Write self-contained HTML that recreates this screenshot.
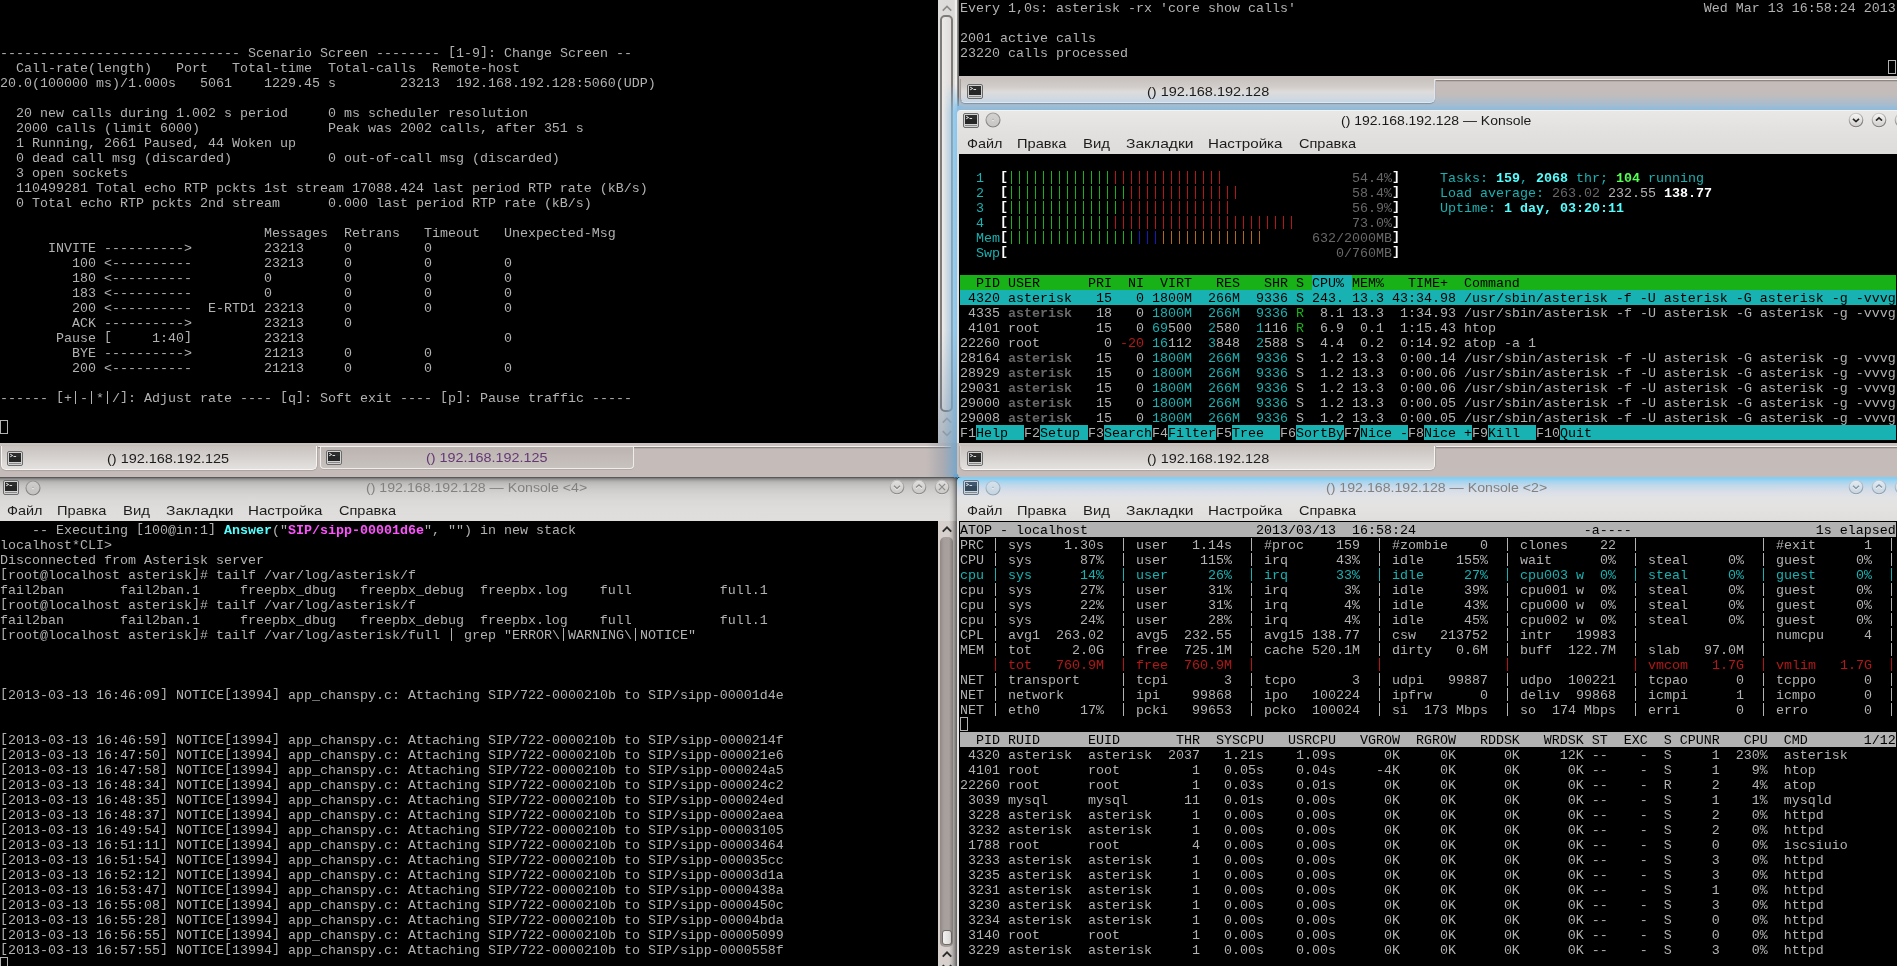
<!DOCTYPE html>
<html><head><meta charset="utf-8"><title>konsole</title>
<style>
html,body{margin:0;padding:0}
body{width:1897px;height:966px;overflow:hidden;background:#000;position:relative;font-family:"Liberation Sans",sans-serif}
#root{position:absolute;left:0;top:0;width:1897px;height:966px;overflow:hidden;will-change:transform}
.t{position:absolute;font:13.333px/15px "Liberation Mono",monospace;color:#b2b2b2;white-space:pre}
.l{position:absolute;height:15px;line-height:15px;white-space:pre}
.b{position:absolute;height:15px}
.v{position:absolute;height:13px;background:repeating-linear-gradient(90deg,transparent 0,transparent 3px,var(--c) 3px,var(--c) 4px,transparent 4px,transparent 8px)}
i{font-style:normal;position:relative;top:-2px}
u{text-decoration:none;color:transparent}
.cur{position:absolute;width:6px;height:12px;border:1px solid #b2b2b2;margin-top:0px}
.bw{color:#fff;font-weight:bold}.fc{color:#18b2b2}.bc{color:#54ffff;font-weight:bold}
.fg{color:#18b218}.bg2{color:#54ff54;font-weight:bold}.fr{color:#b21818}.fb{color:#1818b2}
.fy{color:#b26818}.fd{color:#686868}.bd{color:#686868;font-weight:bold}.bm{color:#ff54ff;font-weight:bold}.fk{color:#000}

.a{position:absolute}
.ui{position:absolute;font-family:"Liberation Sans",sans-serif;white-space:pre}
.tabbar{position:absolute;height:34px;background:#c5bcb9}
.tabbar .top{position:absolute;left:0;right:0;top:0;height:3px;background:#cac2bf}
.tabbar .hl{position:absolute;top:3px;height:1px;background:#f3f1f0}
.tabbar .sh{position:absolute;top:4px;height:1px;background:#8d8683;box-shadow:0 1px 0 #b5adaa}
.tab{position:absolute;top:3px;height:24px;box-sizing:border-box;border:1px solid #f6f5f4;border-top:0;border-radius:0 0 5px 5px;
 background:linear-gradient(#c9c3c0 0,#d2cdca 8px,#e3e1df 100%);box-shadow:0 1px 1px #aaa29f,1px 0 1px #b0a8a5,-1px 0 1px #b0a8a5}
.tab2{position:absolute;top:4px;height:22px;box-sizing:border-box;border:1px solid #efedec;border-top:0;border-radius:0 0 4px 4px;
 background:linear-gradient(#bcb4b1,#c8c2bf);box-shadow:0 1px 0 #b3aaa7}
.tabtxt{font-size:13px;letter-spacing:.62px;color:#1e1e1e;line-height:15px}
.title{position:absolute;height:23px}
.menu{position:absolute;height:21px;background:#dfdddb}
.u{font-size:12.2px;line-height:15px;transform-origin:0 0}
.ttxt{font-size:13px;letter-spacing:.6px;line-height:15px}
.sbt{position:absolute;width:19px;background:#dddbd9}
</style></head>
<body>
<div id="root">
<div class="t" style="left:0px;top:0px">
<div class="l" style="top:46px;left:0px">------------------------------ Scenario Screen -------- <i>[</i>1-9<i>]</i>: Change Screen --</div>
<div class="l" style="top:61px;left:0px">  Call-rate(length)   Port   Total-time  Total-calls  Remote-host</div>
<div class="l" style="top:76px;left:0px">20.0(100000 ms)/1.000s   5061    1229.45 s        23213  192.168.192.128:5060(UDP)</div>
<div class="l" style="top:106px;left:0px">  20 new calls during 1.002 s period     0 ms scheduler resolution</div>
<div class="l" style="top:121px;left:0px">  2000 calls (limit 6000)                Peak was 2002 calls, after 351 s</div>
<div class="l" style="top:136px;left:0px">  1 Running, 2661 Paused, 44 Woken up</div>
<div class="l" style="top:151px;left:0px">  0 dead call msg (discarded)            0 out-of-call msg (discarded)</div>
<div class="l" style="top:166px;left:0px">  3 open sockets</div>
<div class="l" style="top:181px;left:0px">  110499281 Total echo RTP pckts 1st stream 17088.424 last period RTP rate (kB/s)</div>
<div class="l" style="top:196px;left:0px">  0 Total echo RTP pckts 2nd stream      0.000 last period RTP rate (kB/s)</div>
<div class="l" style="top:226px;left:0px">                                 Messages  Retrans   Timeout   Unexpected-Msg</div>
<div class="l" style="top:241px;left:0px">      INVITE ----------&gt;         23213     0         0</div>
<div class="l" style="top:256px;left:0px">         100 &lt;----------         23213     0         0         0</div>
<div class="l" style="top:271px;left:0px">         180 &lt;----------         0         0         0         0</div>
<div class="l" style="top:286px;left:0px">         183 &lt;----------         0         0         0         0</div>
<div class="l" style="top:301px;left:0px">         200 &lt;----------  E-RTD1 23213     0         0         0</div>
<div class="l" style="top:316px;left:0px">         ACK ----------&gt;         23213     0</div>
<div class="l" style="top:331px;left:0px">       Pause <i>[</i>     1:40<i>]</i>         23213                         0</div>
<div class="l" style="top:346px;left:0px">         BYE ----------&gt;         21213     0         0</div>
<div class="l" style="top:361px;left:0px">         200 &lt;----------         21213     0         0         0</div>
<div class="v" style="left:72px;top:391px;width:8px;--c:#b2b2b2"></div>
<div class="v" style="left:88px;top:391px;width:8px;--c:#b2b2b2"></div>
<div class="v" style="left:104px;top:391px;width:8px;--c:#b2b2b2"></div>
<div class="l" style="top:391px;left:0px">------ <i>[</i>+<u>|</u>-<u>|</u>*<u>|</u>/<i>]</i>: Adjust rate ---- <i>[</i>q<i>]</i>: Soft exit ---- <i>[</i>p<i>]</i>: Pause traffic -----</div>
<div class="cur" style="left:0px;top:420px"></div>
</div>
<div class="t" style="left:960px;top:0px">
<div class="l" style="top:1px;left:0px">Every 1,0s: asterisk -rx 'core show calls'                                                   Wed Mar 13 16:58:24 2013</div>
<div class="l" style="top:31px;left:0px">2001 active calls</div>
<div class="l" style="top:46px;left:0px">23220 calls processed</div>
<div class="cur" style="left:928px;top:60px"></div>
</div>
<div class="t" style="left:960px;top:155px">
<div class="v" style="left:48px;top:16px;width:104px;--c:#18b218"></div>
<div class="v" style="left:152px;top:16px;width:112px;--c:#b21818"></div>
<div class="l" style="top:16px;left:0px"><span class="fc">  1  </span><span class="bw"><i>[</i></span><span class="fg"><u>|||||||||||||</u></span><span class="fr"><u>||||||||||||||</u></span>                <span class="fd">54.4%</span><span class="bw"><i>]</i></span></div>
<div class="v" style="left:48px;top:31px;width:120px;--c:#18b218"></div>
<div class="v" style="left:168px;top:31px;width:112px;--c:#b21818"></div>
<div class="l" style="top:31px;left:0px"><span class="fc">  2  </span><span class="bw"><i>[</i></span><span class="fg"><u>|||||||||||||||</u></span><span class="fr"><u>||||||||||||||</u></span>              <span class="fd">58.4%</span><span class="bw"><i>]</i></span></div>
<div class="v" style="left:48px;top:46px;width:112px;--c:#18b218"></div>
<div class="v" style="left:160px;top:46px;width:112px;--c:#b21818"></div>
<div class="l" style="top:46px;left:0px"><span class="fc">  3  </span><span class="bw"><i>[</i></span><span class="fg"><u>||||||||||||||</u></span><span class="fr"><u>||||||||||||||</u></span>               <span class="fd">56.9%</span><span class="bw"><i>]</i></span></div>
<div class="v" style="left:48px;top:61px;width:104px;--c:#18b218"></div>
<div class="v" style="left:152px;top:61px;width:184px;--c:#b21818"></div>
<div class="l" style="top:61px;left:0px"><span class="fc">  4  </span><span class="bw"><i>[</i></span><span class="fg"><u>|||||||||||||</u></span><span class="fr"><u>|||||||||||||||||||||||</u></span>       <span class="fd">73.0%</span><span class="bw"><i>]</i></span></div>
<div class="v" style="left:48px;top:76px;width:128px;--c:#18b218"></div>
<div class="v" style="left:176px;top:76px;width:24px;--c:#1818b2"></div>
<div class="v" style="left:200px;top:76px;width:104px;--c:#b26818"></div>
<div class="l" style="top:76px;left:0px"><span class="fc">  Mem</span><span class="bw"><i>[</i></span><span class="fg"><u>||||||||||||||||</u></span><span class="fb"><u>|||</u></span><span class="fy"><u>|||||||||||||</u></span>      <span class="fd">632/2000MB</span><span class="bw"><i>]</i></span></div>
<div class="l" style="top:91px;left:0px"><span class="fc">  Swp</span><span class="bw"><i>[</i></span>                                         <span class="fd">0/760MB</span><span class="bw"><i>]</i></span></div>
<div class="l" style="top:16px;left:480px"><span class="fc">Tasks: </span><span class="bc">159</span><span class="fc">, </span><span class="bc">2068</span><span class="fc"> thr; </span><span class="bg2">104</span><span class="fc"> running</span></div>
<div class="l" style="top:31px;left:480px"><span class="fc">Load average: </span><span class="fd">263.02 </span>232.55 <span class="bw">138.77</span></div>
<div class="l" style="top:46px;left:480px"><span class="fc">Uptime: </span><span class="bc">1 day, 03:20:11</span></div>
<div class="b" style="left:0px;top:120px;width:936px;background:#18b218"></div>
<div class="b" style="left:352px;top:120px;width:40px;background:#18b2b2"></div>
<div class="l" style="top:121px;left:0px"><span class="fk">  PID USER      PRI  NI  VIRT   RES   SHR S CPU% MEM%   TIME+  Command</span></div>
<div class="b" style="left:0px;top:135px;width:936px;background:#18b2b2"></div>
<div class="l" style="top:136px;left:0px"><span class="fk"> 4320 asterisk   15   0 1800M  266M  9336 S 243. 13.3 43:34.98 /usr/sbin/asterisk -f -U asterisk -G asterisk -g -vvvg</span></div>
<div class="l" style="top:151px;left:0px"> 4335 <span class="bd">asterisk  </span> 18   0 <span class="fc">1800M</span> <span class="fc"> 266M</span> <span class="fc"> 9336</span> <span class="fg">R </span> 8.1 13.3  1:34.93 /usr/sbin/asterisk -f -U asterisk -G asterisk -g -vvvg</div>
<div class="l" style="top:166px;left:0px"> 4101 root       15   0 <span class="fc">69</span>500 <span class="fc"> 2</span>580 <span class="fc"> 1</span>116 <span class="fg">R </span> 6.9  0.1  1:15.43 htop</div>
<div class="l" style="top:181px;left:0px">22260 root        0 <span class="fr">-20 </span><span class="fc">16</span>112 <span class="fc"> 3</span>848 <span class="fc"> 2</span>588 S  4.4  0.2  0:14.92 atop -a 1</div>
<div class="l" style="top:196px;left:0px">28164 <span class="bd">asterisk  </span> 15   0 <span class="fc">1800M</span> <span class="fc"> 266M</span> <span class="fc"> 9336</span> S  1.2 13.3  0:00.14 /usr/sbin/asterisk -f -U asterisk -G asterisk -g -vvvg</div>
<div class="l" style="top:211px;left:0px">28929 <span class="bd">asterisk  </span> 15   0 <span class="fc">1800M</span> <span class="fc"> 266M</span> <span class="fc"> 9336</span> S  1.2 13.3  0:00.06 /usr/sbin/asterisk -f -U asterisk -G asterisk -g -vvvg</div>
<div class="l" style="top:226px;left:0px">29031 <span class="bd">asterisk  </span> 15   0 <span class="fc">1800M</span> <span class="fc"> 266M</span> <span class="fc"> 9336</span> S  1.2 13.3  0:00.06 /usr/sbin/asterisk -f -U asterisk -G asterisk -g -vvvg</div>
<div class="l" style="top:241px;left:0px">29000 <span class="bd">asterisk  </span> 15   0 <span class="fc">1800M</span> <span class="fc"> 266M</span> <span class="fc"> 9336</span> S  1.2 13.3  0:00.05 /usr/sbin/asterisk -f -U asterisk -G asterisk -g -vvvg</div>
<div class="l" style="top:256px;left:0px">29008 <span class="bd">asterisk  </span> 15   0 <span class="fc">1800M</span> <span class="fc"> 266M</span> <span class="fc"> 9336</span> S  1.2 13.3  0:00.05 /usr/sbin/asterisk -f -U asterisk -G asterisk -g -vvvg</div>
<div class="b" style="left:16px;top:270px;width:48px;background:#18b2b2"></div>
<div class="b" style="left:80px;top:270px;width:48px;background:#18b2b2"></div>
<div class="b" style="left:144px;top:270px;width:48px;background:#18b2b2"></div>
<div class="b" style="left:208px;top:270px;width:48px;background:#18b2b2"></div>
<div class="b" style="left:272px;top:270px;width:48px;background:#18b2b2"></div>
<div class="b" style="left:336px;top:270px;width:48px;background:#18b2b2"></div>
<div class="b" style="left:400px;top:270px;width:48px;background:#18b2b2"></div>
<div class="b" style="left:464px;top:270px;width:48px;background:#18b2b2"></div>
<div class="b" style="left:528px;top:270px;width:48px;background:#18b2b2"></div>
<div class="b" style="left:600px;top:270px;width:32px;background:#18b2b2"></div>
<div class="b" style="left:632px;top:270px;width:304px;background:#18b2b2"></div>
<div class="l" style="top:271px;left:0px">F1<span class="fk">Help  </span>F2<span class="fk">Setup </span>F3<span class="fk">Search</span>F4<span class="fk">Filter</span>F5<span class="fk">Tree  </span>F6<span class="fk">SortBy</span>F7<span class="fk">Nice -</span>F8<span class="fk">Nice +</span>F9<span class="fk">Kill  </span>F10<span class="fk">Quit</span></div>
</div>
<div class="t" style="left:0px;top:522px">
<div class="l" style="top:1px;left:0px">    -- Executing <i>[</i>100@in:1<i>]</i> <span class="bc">Answer</span>("<span class="bm">SIP/sipp-00001d6e</span>", "") in new stack</div>
<div class="l" style="top:16px;left:0px">localhost*CLI&gt;</div>
<div class="l" style="top:31px;left:0px">Disconnected from Asterisk server</div>
<div class="l" style="top:46px;left:0px"><i>[</i>root@localhost asterisk<i>]</i># tailf /var/log/asterisk/f</div>
<div class="l" style="top:61px;left:0px">fail2ban       fail2ban.1     freepbx_dbug   freepbx_debug  freepbx.log    full           full.1</div>
<div class="l" style="top:76px;left:0px"><i>[</i>root@localhost asterisk<i>]</i># tailf /var/log/asterisk/f</div>
<div class="l" style="top:91px;left:0px">fail2ban       fail2ban.1     freepbx_dbug   freepbx_debug  freepbx.log    full           full.1</div>
<div class="v" style="left:448px;top:106px;width:8px;--c:#b2b2b2"></div>
<div class="v" style="left:560px;top:106px;width:8px;--c:#b2b2b2"></div>
<div class="v" style="left:632px;top:106px;width:8px;--c:#b2b2b2"></div>
<div class="l" style="top:106px;left:0px"><i>[</i>root@localhost asterisk<i>]</i># tailf /var/log/asterisk/full <u>|</u> grep "ERROR\<u>|</u>WARNING\<u>|</u>NOTICE"</div>
<div class="l" style="top:166px;left:0px"><i>[</i>2013-03-13 16:46:09<i>]</i> NOTICE<i>[</i>13994<i>]</i> app_chanspy.c: Attaching SIP/722-0000210b to SIP/sipp-00001d4e</div>
<div class="l" style="top:211px;left:0px"><i>[</i>2013-03-13 16:46:59<i>]</i> NOTICE<i>[</i>13994<i>]</i> app_chanspy.c: Attaching SIP/722-0000210b to SIP/sipp-0000214f</div>
<div class="l" style="top:226px;left:0px"><i>[</i>2013-03-13 16:47:50<i>]</i> NOTICE<i>[</i>13994<i>]</i> app_chanspy.c: Attaching SIP/722-0000210b to SIP/sipp-000021e6</div>
<div class="l" style="top:241px;left:0px"><i>[</i>2013-03-13 16:47:58<i>]</i> NOTICE<i>[</i>13994<i>]</i> app_chanspy.c: Attaching SIP/722-0000210b to SIP/sipp-000024a5</div>
<div class="l" style="top:256px;left:0px"><i>[</i>2013-03-13 16:48:34<i>]</i> NOTICE<i>[</i>13994<i>]</i> app_chanspy.c: Attaching SIP/722-0000210b to SIP/sipp-000024c2</div>
<div class="l" style="top:271px;left:0px"><i>[</i>2013-03-13 16:48:35<i>]</i> NOTICE<i>[</i>13994<i>]</i> app_chanspy.c: Attaching SIP/722-0000210b to SIP/sipp-000024ed</div>
<div class="l" style="top:286px;left:0px"><i>[</i>2013-03-13 16:48:37<i>]</i> NOTICE<i>[</i>13994<i>]</i> app_chanspy.c: Attaching SIP/722-0000210b to SIP/sipp-00002aea</div>
<div class="l" style="top:301px;left:0px"><i>[</i>2013-03-13 16:49:54<i>]</i> NOTICE<i>[</i>13994<i>]</i> app_chanspy.c: Attaching SIP/722-0000210b to SIP/sipp-00003105</div>
<div class="l" style="top:316px;left:0px"><i>[</i>2013-03-13 16:51:11<i>]</i> NOTICE<i>[</i>13994<i>]</i> app_chanspy.c: Attaching SIP/722-0000210b to SIP/sipp-00003464</div>
<div class="l" style="top:331px;left:0px"><i>[</i>2013-03-13 16:51:54<i>]</i> NOTICE<i>[</i>13994<i>]</i> app_chanspy.c: Attaching SIP/722-0000210b to SIP/sipp-000035cc</div>
<div class="l" style="top:346px;left:0px"><i>[</i>2013-03-13 16:52:12<i>]</i> NOTICE<i>[</i>13994<i>]</i> app_chanspy.c: Attaching SIP/722-0000210b to SIP/sipp-00003d1a</div>
<div class="l" style="top:361px;left:0px"><i>[</i>2013-03-13 16:53:47<i>]</i> NOTICE<i>[</i>13994<i>]</i> app_chanspy.c: Attaching SIP/722-0000210b to SIP/sipp-0000438a</div>
<div class="l" style="top:376px;left:0px"><i>[</i>2013-03-13 16:55:08<i>]</i> NOTICE<i>[</i>13994<i>]</i> app_chanspy.c: Attaching SIP/722-0000210b to SIP/sipp-0000450c</div>
<div class="l" style="top:391px;left:0px"><i>[</i>2013-03-13 16:55:28<i>]</i> NOTICE<i>[</i>13994<i>]</i> app_chanspy.c: Attaching SIP/722-0000210b to SIP/sipp-00004bda</div>
<div class="l" style="top:406px;left:0px"><i>[</i>2013-03-13 16:56:55<i>]</i> NOTICE<i>[</i>13994<i>]</i> app_chanspy.c: Attaching SIP/722-0000210b to SIP/sipp-00005099</div>
<div class="l" style="top:421px;left:0px"><i>[</i>2013-03-13 16:57:55<i>]</i> NOTICE<i>[</i>13994<i>]</i> app_chanspy.c: Attaching SIP/722-0000210b to SIP/sipp-0000558f</div>
<div class="cur" style="left:0px;top:435px"></div>
</div>
<div class="t" style="left:960px;top:522px">
<div class="b" style="left:0px;top:0px;width:936px;background:#b2b2b2"></div>
<div class="l" style="top:1px;left:0px"><span class="fk">ATOP - localhost                     2013/03/13  16:58:24                     -a----                       1s elapsed</span></div>
<div class="v" style="left:32px;top:16px;width:8px;--c:#b2b2b2"></div>
<div class="v" style="left:160px;top:16px;width:8px;--c:#b2b2b2"></div>
<div class="v" style="left:288px;top:16px;width:8px;--c:#b2b2b2"></div>
<div class="v" style="left:416px;top:16px;width:8px;--c:#b2b2b2"></div>
<div class="v" style="left:544px;top:16px;width:8px;--c:#b2b2b2"></div>
<div class="v" style="left:672px;top:16px;width:8px;--c:#b2b2b2"></div>
<div class="v" style="left:800px;top:16px;width:8px;--c:#b2b2b2"></div>
<div class="v" style="left:928px;top:16px;width:8px;--c:#b2b2b2"></div>
<div class="l" style="top:16px;left:0px">PRC <u>|</u> sys    1.30s  <u>|</u> user   1.14s  <u>|</u> #proc    159  <u>|</u> #zombie    0  <u>|</u> clones    22  <u>|</u>               <u>|</u> #exit      1  <u>|</u></div>
<div class="v" style="left:32px;top:31px;width:8px;--c:#b2b2b2"></div>
<div class="v" style="left:160px;top:31px;width:8px;--c:#b2b2b2"></div>
<div class="v" style="left:288px;top:31px;width:8px;--c:#b2b2b2"></div>
<div class="v" style="left:416px;top:31px;width:8px;--c:#b2b2b2"></div>
<div class="v" style="left:544px;top:31px;width:8px;--c:#b2b2b2"></div>
<div class="v" style="left:672px;top:31px;width:8px;--c:#b2b2b2"></div>
<div class="v" style="left:800px;top:31px;width:8px;--c:#b2b2b2"></div>
<div class="v" style="left:928px;top:31px;width:8px;--c:#b2b2b2"></div>
<div class="l" style="top:31px;left:0px">CPU <u>|</u> sys      87%  <u>|</u> user    115%  <u>|</u> irq      43%  <u>|</u> idle    155%  <u>|</u> wait      0%  <u>|</u> steal     0%  <u>|</u> guest     0%  <u>|</u></div>
<div class="v" style="left:32px;top:46px;width:8px;--c:#18b2b2"></div>
<div class="v" style="left:160px;top:46px;width:8px;--c:#18b2b2"></div>
<div class="v" style="left:288px;top:46px;width:8px;--c:#18b2b2"></div>
<div class="v" style="left:416px;top:46px;width:8px;--c:#18b2b2"></div>
<div class="v" style="left:544px;top:46px;width:8px;--c:#18b2b2"></div>
<div class="v" style="left:672px;top:46px;width:8px;--c:#18b2b2"></div>
<div class="v" style="left:800px;top:46px;width:8px;--c:#18b2b2"></div>
<div class="v" style="left:928px;top:46px;width:8px;--c:#18b2b2"></div>
<div class="l" style="top:46px;left:0px"><span class="fc">cpu <u>|</u> sys      14%  <u>|</u> user     26%  <u>|</u> irq      33%  <u>|</u> idle     27%  <u>|</u> cpu003 w  0%  <u>|</u> steal     0%  <u>|</u> guest     0%  <u>|</u></span></div>
<div class="v" style="left:32px;top:61px;width:8px;--c:#b2b2b2"></div>
<div class="v" style="left:160px;top:61px;width:8px;--c:#b2b2b2"></div>
<div class="v" style="left:288px;top:61px;width:8px;--c:#b2b2b2"></div>
<div class="v" style="left:416px;top:61px;width:8px;--c:#b2b2b2"></div>
<div class="v" style="left:544px;top:61px;width:8px;--c:#b2b2b2"></div>
<div class="v" style="left:672px;top:61px;width:8px;--c:#b2b2b2"></div>
<div class="v" style="left:800px;top:61px;width:8px;--c:#b2b2b2"></div>
<div class="v" style="left:928px;top:61px;width:8px;--c:#b2b2b2"></div>
<div class="l" style="top:61px;left:0px">cpu <u>|</u> sys      27%  <u>|</u> user     31%  <u>|</u> irq       3%  <u>|</u> idle     39%  <u>|</u> cpu001 w  0%  <u>|</u> steal     0%  <u>|</u> guest     0%  <u>|</u></div>
<div class="v" style="left:32px;top:76px;width:8px;--c:#b2b2b2"></div>
<div class="v" style="left:160px;top:76px;width:8px;--c:#b2b2b2"></div>
<div class="v" style="left:288px;top:76px;width:8px;--c:#b2b2b2"></div>
<div class="v" style="left:416px;top:76px;width:8px;--c:#b2b2b2"></div>
<div class="v" style="left:544px;top:76px;width:8px;--c:#b2b2b2"></div>
<div class="v" style="left:672px;top:76px;width:8px;--c:#b2b2b2"></div>
<div class="v" style="left:800px;top:76px;width:8px;--c:#b2b2b2"></div>
<div class="v" style="left:928px;top:76px;width:8px;--c:#b2b2b2"></div>
<div class="l" style="top:76px;left:0px">cpu <u>|</u> sys      22%  <u>|</u> user     31%  <u>|</u> irq       4%  <u>|</u> idle     43%  <u>|</u> cpu000 w  0%  <u>|</u> steal     0%  <u>|</u> guest     0%  <u>|</u></div>
<div class="v" style="left:32px;top:91px;width:8px;--c:#b2b2b2"></div>
<div class="v" style="left:160px;top:91px;width:8px;--c:#b2b2b2"></div>
<div class="v" style="left:288px;top:91px;width:8px;--c:#b2b2b2"></div>
<div class="v" style="left:416px;top:91px;width:8px;--c:#b2b2b2"></div>
<div class="v" style="left:544px;top:91px;width:8px;--c:#b2b2b2"></div>
<div class="v" style="left:672px;top:91px;width:8px;--c:#b2b2b2"></div>
<div class="v" style="left:800px;top:91px;width:8px;--c:#b2b2b2"></div>
<div class="v" style="left:928px;top:91px;width:8px;--c:#b2b2b2"></div>
<div class="l" style="top:91px;left:0px">cpu <u>|</u> sys      24%  <u>|</u> user     28%  <u>|</u> irq       4%  <u>|</u> idle     45%  <u>|</u> cpu002 w  0%  <u>|</u> steal     0%  <u>|</u> guest     0%  <u>|</u></div>
<div class="v" style="left:32px;top:106px;width:8px;--c:#b2b2b2"></div>
<div class="v" style="left:160px;top:106px;width:8px;--c:#b2b2b2"></div>
<div class="v" style="left:288px;top:106px;width:8px;--c:#b2b2b2"></div>
<div class="v" style="left:416px;top:106px;width:8px;--c:#b2b2b2"></div>
<div class="v" style="left:544px;top:106px;width:8px;--c:#b2b2b2"></div>
<div class="v" style="left:672px;top:106px;width:8px;--c:#b2b2b2"></div>
<div class="v" style="left:800px;top:106px;width:8px;--c:#b2b2b2"></div>
<div class="v" style="left:928px;top:106px;width:8px;--c:#b2b2b2"></div>
<div class="l" style="top:106px;left:0px">CPL <u>|</u> avg1  263.02  <u>|</u> avg5  232.55  <u>|</u> avg15 138.77  <u>|</u> csw   213752  <u>|</u> intr   19983  <u>|</u>               <u>|</u> numcpu     4  <u>|</u></div>
<div class="v" style="left:32px;top:121px;width:8px;--c:#b2b2b2"></div>
<div class="v" style="left:160px;top:121px;width:8px;--c:#b2b2b2"></div>
<div class="v" style="left:288px;top:121px;width:8px;--c:#b2b2b2"></div>
<div class="v" style="left:416px;top:121px;width:8px;--c:#b2b2b2"></div>
<div class="v" style="left:544px;top:121px;width:8px;--c:#b2b2b2"></div>
<div class="v" style="left:672px;top:121px;width:8px;--c:#b2b2b2"></div>
<div class="v" style="left:800px;top:121px;width:8px;--c:#b2b2b2"></div>
<div class="v" style="left:928px;top:121px;width:8px;--c:#b2b2b2"></div>
<div class="l" style="top:121px;left:0px">MEM <u>|</u> tot     2.0G  <u>|</u> free  725.1M  <u>|</u> cache 520.1M  <u>|</u> dirty   0.6M  <u>|</u> buff  122.7M  <u>|</u> slab   97.0M  <u>|</u>               <u>|</u></div>
<div class="v" style="left:32px;top:136px;width:8px;--c:#b21818"></div>
<div class="v" style="left:160px;top:136px;width:8px;--c:#b21818"></div>
<div class="v" style="left:288px;top:136px;width:8px;--c:#b21818"></div>
<div class="v" style="left:416px;top:136px;width:8px;--c:#b21818"></div>
<div class="v" style="left:544px;top:136px;width:8px;--c:#b21818"></div>
<div class="v" style="left:672px;top:136px;width:8px;--c:#b21818"></div>
<div class="v" style="left:800px;top:136px;width:8px;--c:#b21818"></div>
<div class="v" style="left:928px;top:136px;width:8px;--c:#b21818"></div>
<div class="l" style="top:136px;left:0px"><span class="fr">    <u>|</u> tot   760.9M  <u>|</u> free  760.9M  <u>|</u>               <u>|</u>               <u>|</u>               <u>|</u> vmcom   1.7G  <u>|</u> vmlim   1.7G  <u>|</u></span></div>
<div class="v" style="left:32px;top:151px;width:8px;--c:#b2b2b2"></div>
<div class="v" style="left:160px;top:151px;width:8px;--c:#b2b2b2"></div>
<div class="v" style="left:288px;top:151px;width:8px;--c:#b2b2b2"></div>
<div class="v" style="left:416px;top:151px;width:8px;--c:#b2b2b2"></div>
<div class="v" style="left:544px;top:151px;width:8px;--c:#b2b2b2"></div>
<div class="v" style="left:672px;top:151px;width:8px;--c:#b2b2b2"></div>
<div class="v" style="left:800px;top:151px;width:8px;--c:#b2b2b2"></div>
<div class="v" style="left:928px;top:151px;width:8px;--c:#b2b2b2"></div>
<div class="l" style="top:151px;left:0px">NET <u>|</u> transport     <u>|</u> tcpi       3  <u>|</u> tcpo       3  <u>|</u> udpi   99887  <u>|</u> udpo  100221  <u>|</u> tcpao      0  <u>|</u> tcppo      0  <u>|</u></div>
<div class="v" style="left:32px;top:166px;width:8px;--c:#b2b2b2"></div>
<div class="v" style="left:160px;top:166px;width:8px;--c:#b2b2b2"></div>
<div class="v" style="left:288px;top:166px;width:8px;--c:#b2b2b2"></div>
<div class="v" style="left:416px;top:166px;width:8px;--c:#b2b2b2"></div>
<div class="v" style="left:544px;top:166px;width:8px;--c:#b2b2b2"></div>
<div class="v" style="left:672px;top:166px;width:8px;--c:#b2b2b2"></div>
<div class="v" style="left:800px;top:166px;width:8px;--c:#b2b2b2"></div>
<div class="v" style="left:928px;top:166px;width:8px;--c:#b2b2b2"></div>
<div class="l" style="top:166px;left:0px">NET <u>|</u> network       <u>|</u> ipi    99868  <u>|</u> ipo   100224  <u>|</u> ipfrw      0  <u>|</u> deliv  99868  <u>|</u> icmpi      1  <u>|</u> icmpo      0  <u>|</u></div>
<div class="v" style="left:32px;top:181px;width:8px;--c:#b2b2b2"></div>
<div class="v" style="left:160px;top:181px;width:8px;--c:#b2b2b2"></div>
<div class="v" style="left:288px;top:181px;width:8px;--c:#b2b2b2"></div>
<div class="v" style="left:416px;top:181px;width:8px;--c:#b2b2b2"></div>
<div class="v" style="left:544px;top:181px;width:8px;--c:#b2b2b2"></div>
<div class="v" style="left:672px;top:181px;width:8px;--c:#b2b2b2"></div>
<div class="v" style="left:800px;top:181px;width:8px;--c:#b2b2b2"></div>
<div class="v" style="left:928px;top:181px;width:8px;--c:#b2b2b2"></div>
<div class="l" style="top:181px;left:0px">NET <u>|</u> eth0     17%  <u>|</u> pcki   99653  <u>|</u> pcko  100024  <u>|</u> si  173 Mbps  <u>|</u> so  174 Mbps  <u>|</u> erri       0  <u>|</u> erro       0  <u>|</u></div>
<div class="cur" style="left:0px;top:195px"></div>
<div class="b" style="left:0px;top:210px;width:936px;background:#b2b2b2"></div>
<div class="l" style="top:211px;left:0px"><span class="fk">  PID RUID      EUID       THR  SYSCPU   USRCPU   VGROW  RGROW   RDDSK   WRDSK ST  EXC  S CPUNR   CPU  CMD       1/12</span></div>
<div class="l" style="top:226px;left:0px"> 4320 asterisk  asterisk  2037   1.21s    1.09s      0K     0K      0K     12K --    -  S     1  230%  asterisk</div>
<div class="l" style="top:241px;left:0px"> 4101 root      root         1   0.05s    0.04s     -4K     0K      0K      0K --    -  S     1    9%  htop</div>
<div class="l" style="top:256px;left:0px">22260 root      root         1   0.03s    0.01s      0K     0K      0K      0K --    -  R     2    4%  atop</div>
<div class="l" style="top:271px;left:0px"> 3039 mysql     mysql       11   0.01s    0.00s      0K     0K      0K      0K --    -  S     1    1%  mysqld</div>
<div class="l" style="top:286px;left:0px"> 3228 asterisk  asterisk     1   0.00s    0.00s      0K     0K      0K      0K --    -  S     2    0%  httpd</div>
<div class="l" style="top:301px;left:0px"> 3232 asterisk  asterisk     1   0.00s    0.00s      0K     0K      0K      0K --    -  S     2    0%  httpd</div>
<div class="l" style="top:316px;left:0px"> 1788 root      root         4   0.00s    0.00s      0K     0K      0K      0K --    -  S     0    0%  iscsiuio</div>
<div class="l" style="top:331px;left:0px"> 3233 asterisk  asterisk     1   0.00s    0.00s      0K     0K      0K      0K --    -  S     3    0%  httpd</div>
<div class="l" style="top:346px;left:0px"> 3235 asterisk  asterisk     1   0.00s    0.00s      0K     0K      0K      0K --    -  S     3    0%  httpd</div>
<div class="l" style="top:361px;left:0px"> 3231 asterisk  asterisk     1   0.00s    0.00s      0K     0K      0K      0K --    -  S     1    0%  httpd</div>
<div class="l" style="top:376px;left:0px"> 3230 asterisk  asterisk     1   0.00s    0.00s      0K     0K      0K      0K --    -  S     3    0%  httpd</div>
<div class="l" style="top:391px;left:0px"> 3234 asterisk  asterisk     1   0.00s    0.00s      0K     0K      0K      0K --    -  S     0    0%  httpd</div>
<div class="l" style="top:406px;left:0px"> 3140 root      root         1   0.00s    0.00s      0K     0K      0K      0K --    -  S     0    0%  httpd</div>
<div class="l" style="top:421px;left:0px"> 3229 asterisk  asterisk     1   0.00s    0.00s      0K     0K      0K      0K --    -  S     3    0%  httpd</div>
</div>
<div class="sbt" style="left:938px;top:0;height:443px;background:linear-gradient(90deg,#dfdddb,#dcdad8 80%,#e6e5e4)"></div>
<div class="a" style="left:955px;top:0;width:2px;height:104px;background:#efeeed"></div>
<div class="a" style="left:957px;top:0;width:2px;height:110px;background:linear-gradient(90deg,#a09c9a,#5c5a58)"></div>
<div class="a" style="left:957px;top:96px;width:2px;height:14px;background:linear-gradient(180deg,rgba(126,190,236,0),rgba(126,190,236,.9))"></div>
<div class="a" style="left:940px;top:15px;width:13px;height:397px;box-sizing:border-box;border:2px solid #7f7b79;border-radius:5px;background:linear-gradient(90deg,#ecebea,#dfdcda)"></div>
<svg class="a" style="left:942px;top:5px" width="10" height="7" viewBox="0 0 9.4 6.4"><path d="M0.7 5.2 L4.7 1.2 L8.7 5.2" fill="none" stroke="#8e8a88" stroke-width="1.5"/></svg>
<svg class="a" style="left:942px;top:417px" width="10" height="7" viewBox="0 0 9.4 6.4"><path d="M0.7 5.2 L4.7 1.2 L8.7 5.2" fill="none" stroke="#aaa6a4" stroke-width="1.5"/></svg>
<svg class="a" style="left:942px;top:430px" width="10" height="7" viewBox="0 0 9.4 6.4"><path d="M0.7 1 L4.7 5 L8.7 1" fill="none" stroke="#aaa6a4" stroke-width="1.5"/></svg>
<div class="sbt" style="left:938px;top:521px;height:445px;background:linear-gradient(90deg,#d8d0cd,#d6d0cd 60%,#c4c0bd 80%,#b8b4b1)"></div>
<div class="a" style="left:940px;top:537px;width:13px;height:410px;border-radius:5px;background:linear-gradient(90deg,#8f8885,#a69f9c 30%,#a8a19e 70%,#8f8885)"></div>
<div class="a" style="left:942px;top:930px;width:10px;height:15px;box-sizing:border-box;border:1px solid #6e6a68;border-radius:3px;background:linear-gradient(90deg,#f2f1f0,#dcd9d7)"></div>
<svg class="a" style="left:942px;top:526px" width="10" height="7" viewBox="0 0 9.4 6.4"><path d="M0.7 5.2 L4.7 1.2 L8.7 5.2" fill="none" stroke="#2c2c2c" stroke-width="1.8"/></svg>
<svg class="a" style="left:942px;top:951px" width="10" height="7" viewBox="0 0 9.4 6.4"><path d="M0.7 5.2 L4.7 1.2 L8.7 5.2" fill="none" stroke="#2c2c2c" stroke-width="1.8"/></svg>
<svg class="a" style="left:942px;top:964px" width="10" height="7" viewBox="0 0 9.4 6.4"><path d="M0.7 1 L4.7 5 L8.7 1" fill="none" stroke="#2c2c2c" stroke-width="1.8"/></svg>
<div class="tabbar" style="left:0;top:443px;width:957px"><div class="top"></div><div class="hl" style="left:316px;right:6px"></div><div class="sh" style="left:317px;right:6px"></div><div class="tab" style="left:1px;width:316px"></div><div class="tab2" style="left:320px;width:314px"></div><svg class="a" style="left:7px;top:8px" width="16" height="15" viewBox="0 0 16 15"><rect x=".5" y=".5" width="15" height="14" rx="1.5" fill="#d2d2d2" stroke="#6c6c6c"/><rect x="2" y="2" width="12" height="9" fill="#262626"/><rect x="2" y="2" width="12" height="4" fill="#333" opacity=".6"/><path d="M3.2 3.2 L5.6 4.5 L3.2 5.8" fill="none" stroke="#e8e8e8" stroke-width="1"/><rect x="6.5" y="5" width="2.6" height="1" fill="#dcdcdc"/><rect x="2" y="12" width="12" height="1" fill="#8a8a8a"/></svg><svg class="a" style="left:326px;top:7px" width="16" height="15" viewBox="0 0 16 15"><rect x=".5" y=".5" width="15" height="14" rx="1.5" fill="#d2d2d2" stroke="#6c6c6c"/><rect x="2" y="2" width="12" height="9" fill="#262626"/><rect x="2" y="2" width="12" height="4" fill="#333" opacity=".6"/><path d="M3.2 3.2 L5.6 4.5 L3.2 5.8" fill="none" stroke="#e8e8e8" stroke-width="1"/><rect x="6.5" y="5" width="2.6" height="1" fill="#dcdcdc"/><rect x="2" y="12" width="12" height="1" fill="#8a8a8a"/></svg><div class="ui u" style="left:106.60px;top:9px;color:#1c1c1c;transform:scaleX(1.1853)">() 192.168.192.125</div><div class="ui u" style="left:426.00px;top:8px;color:#643874;transform:scaleX(1.1784)">() 192.168.192.125</div></div>
<div class="title" style="left:0;top:477px;width:957px;height:44px;background:linear-gradient(#3e3e3e 0,#747474 1px,#8c8c8c 2px,#9f9e9e 3px,#b7b6b5 5px,#c3c2c1 8px,#cecdcc 13px,#d5d4d3 18px,#dad9d8 23px,#dedddc 33px,#dfdedd 44px)"></div>
<svg class="a" style="left:3px;top:480px" width="16" height="15" viewBox="0 0 16 15"><rect x=".5" y=".5" width="15" height="14" rx="1.5" fill="#d2d2d2" stroke="#6c6c6c"/><rect x="2" y="2" width="12" height="9" fill="#262626"/><rect x="2" y="2" width="12" height="4" fill="#333" opacity=".6"/><path d="M3.2 3.2 L5.6 4.5 L3.2 5.8" fill="none" stroke="#e8e8e8" stroke-width="1"/><rect x="6.5" y="5" width="2.6" height="1" fill="#dcdcdc"/><rect x="2" y="12" width="12" height="1" fill="#8a8a8a"/></svg>
<svg class="a" style="left:25.2px;top:479.5px" width="16" height="17" viewBox="0 0 16 17"><defs><linearGradient id="b1f" x1="0" y1="0" x2="0" y2="1"><stop offset="0" stop-color="#cfcdcb"/><stop offset="1" stop-color="#c4c2c0"/></linearGradient><linearGradient id="b1r" x1="0" y1="0" x2="0.3" y2="1"><stop offset="0" stop-color="#9c9a98"/><stop offset="1" stop-color="#807e7c"/></linearGradient></defs><circle cx="8" cy="8.7" r="7" fill="#fff" opacity=".55"/><circle cx="8" cy="8" r="7.0" fill="url(#b1f)" stroke="url(#b1r)" stroke-width="1.1"/><circle cx="8" cy="7.3" r=".55" fill="#8a8886"/><circle cx="8" cy="8.5" r=".7" fill="#f4f4f4"/></svg>
<svg class="a" style="left:888.5px;top:479.2px" width="16" height="17" viewBox="0 0 16 17"><defs><linearGradient id="b2f" x1="0" y1="0" x2="0" y2="1"><stop offset="0" stop-color="#e2e0de"/><stop offset="1" stop-color="#cac8c6"/></linearGradient><linearGradient id="b2r" x1="0" y1="0" x2="0.3" y2="1"><stop offset="0" stop-color="#c8c6c4"/><stop offset="1" stop-color="#8a8886"/></linearGradient></defs><circle cx="8" cy="8.7" r="7" fill="#fff" opacity=".55"/><circle cx="8" cy="8" r="6.8" fill="url(#b2f)" stroke="url(#b2r)" stroke-width="1.1"/><path d="M5 7.6 L8 10.4 L11 7.6" fill="none" stroke="#fff" stroke-opacity=".7" stroke-width="1.6"/><path d="M5 6.8 L8 9.6 L11 6.8" fill="none" stroke="#8e8c8a" stroke-width="1.35"/></svg>
<svg class="a" style="left:911.2px;top:479.2px" width="16" height="17" viewBox="0 0 16 17"><defs><linearGradient id="b3f" x1="0" y1="0" x2="0" y2="1"><stop offset="0" stop-color="#e2e0de"/><stop offset="1" stop-color="#cac8c6"/></linearGradient><linearGradient id="b3r" x1="0" y1="0" x2="0.3" y2="1"><stop offset="0" stop-color="#c8c6c4"/><stop offset="1" stop-color="#8a8886"/></linearGradient></defs><circle cx="8" cy="8.7" r="7" fill="#fff" opacity=".55"/><circle cx="8" cy="8" r="6.8" fill="url(#b3f)" stroke="url(#b3r)" stroke-width="1.1"/><path d="M5 9.4 L8 6.7 L11 9.4" fill="none" stroke="#fff" stroke-opacity=".7" stroke-width="1.6"/><path d="M5 8.6 L8 5.9 L11 8.6" fill="none" stroke="#8e8c8a" stroke-width="1.35"/></svg>
<svg class="a" style="left:934.3px;top:479.2px" width="16" height="17" viewBox="0 0 16 17"><defs><linearGradient id="b4f" x1="0" y1="0" x2="0" y2="1"><stop offset="0" stop-color="#e2e0de"/><stop offset="1" stop-color="#cac8c6"/></linearGradient><linearGradient id="b4r" x1="0" y1="0" x2="0.3" y2="1"><stop offset="0" stop-color="#c8c6c4"/><stop offset="1" stop-color="#8a8886"/></linearGradient></defs><circle cx="8" cy="8.7" r="7" fill="#fff" opacity=".55"/><circle cx="8" cy="8" r="6.8" fill="url(#b4f)" stroke="url(#b4r)" stroke-width="1.1"/><path d="M4.9 4.9 L11.1 11.1 M11.1 4.9 L4.9 11.1" fill="none" stroke="#8e8c8a" stroke-width="1.25"/></svg>
<div class="ui u" style="left:365.60px;top:481px;color:#828180;transform:scaleX(1.1620)">() 192.168.192.128 — Konsole &lt;4&gt;</div>
<div class="menu" style="left:0px;top:500px;width:957px;height:21px;background:transparent"><div class="ui u" style="left:6.70px;top:4px;color:#1c1c1c;transform:scaleX(1.1840)">Файл</div><div class="ui u" style="left:57.30px;top:4px;color:#1c1c1c;transform:scaleX(1.1999)">Правка</div><div class="ui u" style="left:122.50px;top:4px;color:#1c1c1c;transform:scaleX(1.2251)">Вид</div><div class="ui u" style="left:165.50px;top:4px;color:#1c1c1c;transform:scaleX(1.2792)">Закладки</div><div class="ui u" style="left:248.40px;top:4px;color:#1c1c1c;transform:scaleX(1.2407)">Настройка</div><div class="ui u" style="left:338.70px;top:4px;color:#1c1c1c;transform:scaleX(1.1921)">Справка</div></div>
<div class="tabbar" style="left:959px;top:76px;width:938px;background:linear-gradient(#c5bcb9 0,#c3bcba 18px,#a9bccd 28px,#8dbbdc 34px)"><div class="top"></div><div class="hl" style="left:476px;right:0"></div><div class="sh" style="left:477px;right:0;background:#8d8684"></div><div class="tab" style="left:1px;width:475px;border-color:#dfe6ee;border-left-color:#a39d9a;box-shadow:0 1px 1px #7f93a8;background:linear-gradient(#c9c3c0 0,#d2cdca 8px,#dedcdb 55%,#c8d6e5 100%)"></div><svg class="a" style="left:8px;top:8px" width="16" height="15" viewBox="0 0 16 15"><rect x=".5" y=".5" width="15" height="14" rx="1.5" fill="#d2d2d2" stroke="#6c6c6c"/><rect x="2" y="2" width="12" height="9" fill="#262626"/><rect x="2" y="2" width="12" height="4" fill="#333" opacity=".6"/><path d="M3.2 3.2 L5.6 4.5 L3.2 5.8" fill="none" stroke="#e8e8e8" stroke-width="1"/><rect x="6.5" y="5" width="2.6" height="1" fill="#dcdcdc"/><rect x="2" y="12" width="12" height="1" fill="#8a8a8a"/></svg><div class="ui u" style="left:187.60px;top:9px;color:#1c1c1c;transform:scaleX(1.1863)">() 192.168.192.128</div></div>
<div class="a" style="left:957px;top:106px;width:5px;height:8px;background:#8fbcde"></div>
<div class="title" style="left:957px;top:110px;width:940px;height:22px;border-radius:4px 0 0 0;background:linear-gradient(#ffffff 0,#e9e8e7 1px,#e3e1df 22px)"></div>
<svg class="a" style="left:963px;top:113px" width="16" height="15" viewBox="0 0 16 15"><rect x=".5" y=".5" width="15" height="14" rx="1.5" fill="#d2d2d2" stroke="#6c6c6c"/><rect x="2" y="2" width="12" height="9" fill="#262626"/><rect x="2" y="2" width="12" height="4" fill="#333" opacity=".6"/><path d="M3.2 3.2 L5.6 4.5 L3.2 5.8" fill="none" stroke="#e8e8e8" stroke-width="1"/><rect x="6.5" y="5" width="2.6" height="1" fill="#dcdcdc"/><rect x="2" y="12" width="12" height="1" fill="#8a8a8a"/></svg>
<svg class="a" style="left:985.1px;top:112.3px" width="16" height="17" viewBox="0 0 16 17"><defs><linearGradient id="b5f" x1="0" y1="0" x2="0" y2="1"><stop offset="0" stop-color="#d4d2d0"/><stop offset="1" stop-color="#c8c6c4"/></linearGradient><linearGradient id="b5r" x1="0" y1="0" x2="0.3" y2="1"><stop offset="0" stop-color="#a4a2a0"/><stop offset="1" stop-color="#807e7c"/></linearGradient></defs><circle cx="8" cy="8.7" r="7" fill="#fff" opacity=".55"/><circle cx="8" cy="8" r="7.0" fill="url(#b5f)" stroke="url(#b5r)" stroke-width="1.1"/><circle cx="8" cy="7.3" r=".55" fill="#8a8886"/><circle cx="8" cy="8.5" r=".7" fill="#f4f4f4"/></svg>
<svg class="a" style="left:1848.2px;top:112.2px" width="16" height="17" viewBox="0 0 16 17"><defs><linearGradient id="b6f" x1="0" y1="0" x2="0" y2="1"><stop offset="0" stop-color="#f8f7f6"/><stop offset="1" stop-color="#d0ccca"/></linearGradient><linearGradient id="b6r" x1="0" y1="0" x2="0.3" y2="1"><stop offset="0" stop-color="#d8d6d4"/><stop offset="1" stop-color="#7c7a78"/></linearGradient></defs><circle cx="8" cy="8.7" r="7" fill="#fff" opacity=".55"/><circle cx="8" cy="8" r="6.8" fill="url(#b6f)" stroke="url(#b6r)" stroke-width="1.1"/><path d="M5 7.6 L8 10.4 L11 7.6" fill="none" stroke="#fff" stroke-opacity=".7" stroke-width="1.6"/><path d="M5 6.8 L8 9.6 L11 6.8" fill="none" stroke="#262626" stroke-width="1.7"/></svg>
<svg class="a" style="left:1871.2px;top:112.2px" width="16" height="17" viewBox="0 0 16 17"><defs><linearGradient id="b7f" x1="0" y1="0" x2="0" y2="1"><stop offset="0" stop-color="#f8f7f6"/><stop offset="1" stop-color="#d0ccca"/></linearGradient><linearGradient id="b7r" x1="0" y1="0" x2="0.3" y2="1"><stop offset="0" stop-color="#d8d6d4"/><stop offset="1" stop-color="#7c7a78"/></linearGradient></defs><circle cx="8" cy="8.7" r="7" fill="#fff" opacity=".55"/><circle cx="8" cy="8" r="6.8" fill="url(#b7f)" stroke="url(#b7r)" stroke-width="1.1"/><path d="M5 9.4 L8 6.7 L11 9.4" fill="none" stroke="#fff" stroke-opacity=".7" stroke-width="1.6"/><path d="M5 8.6 L8 5.9 L11 8.6" fill="none" stroke="#262626" stroke-width="1.7"/></svg>
<svg class="a" style="left:1894.2px;top:112.2px" width="16" height="17" viewBox="0 0 16 17"><defs><linearGradient id="b8f" x1="0" y1="0" x2="0" y2="1"><stop offset="0" stop-color="#f8f7f6"/><stop offset="1" stop-color="#d0ccca"/></linearGradient><linearGradient id="b8r" x1="0" y1="0" x2="0.3" y2="1"><stop offset="0" stop-color="#d8d6d4"/><stop offset="1" stop-color="#7c7a78"/></linearGradient></defs><circle cx="8" cy="8.7" r="7" fill="#fff" opacity=".55"/><circle cx="8" cy="8" r="6.8" fill="url(#b8f)" stroke="url(#b8r)" stroke-width="1.1"/><path d="M4.9 4.9 L11.1 11.1 M11.1 4.9 L4.9 11.1" fill="none" stroke="#262626" stroke-width="1.25"/></svg>
<div class="ui u" style="left:1341.40px;top:114px;color:#1a1a1a;transform:scaleX(1.1465)">() 192.168.192.128 — Konsole</div>
<div class="menu" style="left:957px;top:132px;width:940px;height:22px;background:linear-gradient(#e3e1df,#dedcda)"><div class="ui u" style="left:9.70px;top:5px;color:#1c1c1c;transform:scaleX(1.1840)">Файл</div><div class="ui u" style="left:60.30px;top:5px;color:#1c1c1c;transform:scaleX(1.1999)">Правка</div><div class="ui u" style="left:125.50px;top:5px;color:#1c1c1c;transform:scaleX(1.2251)">Вид</div><div class="ui u" style="left:168.50px;top:5px;color:#1c1c1c;transform:scaleX(1.2792)">Закладки</div><div class="ui u" style="left:251.40px;top:5px;color:#1c1c1c;transform:scaleX(1.2407)">Настройка</div><div class="ui u" style="left:341.70px;top:5px;color:#1c1c1c;transform:scaleX(1.1921)">Справка</div></div>
<div class="a" style="left:957px;top:153px;width:2px;height:290px;background:#e2e0de"></div>
<div class="tabbar" style="left:959px;top:443px;width:938px"><div class="top"></div><div class="hl" style="left:476px;right:0"></div><div class="sh" style="left:477px;right:0"></div><div class="tab" style="left:1px;width:475px;border-left-color:#d8d4d2"></div><svg class="a" style="left:8px;top:8px" width="16" height="15" viewBox="0 0 16 15"><rect x=".5" y=".5" width="15" height="14" rx="1.5" fill="#d2d2d2" stroke="#6c6c6c"/><rect x="2" y="2" width="12" height="9" fill="#262626"/><rect x="2" y="2" width="12" height="4" fill="#333" opacity=".6"/><path d="M3.2 3.2 L5.6 4.5 L3.2 5.8" fill="none" stroke="#e8e8e8" stroke-width="1"/><rect x="6.5" y="5" width="2.6" height="1" fill="#dcdcdc"/><rect x="2" y="12" width="12" height="1" fill="#8a8a8a"/></svg><div class="ui u" style="left:187.60px;top:9px;color:#1c1c1c;transform:scaleX(1.1863)">() 192.168.192.128</div></div>
<div class="a" style="left:957px;top:443px;width:2px;height:34px;background:#c7bfbc"></div>
<div class="a" style="left:953px;top:473px;width:6px;height:6px;border-radius:3px;background:radial-gradient(circle at 3px 3px,#3f86b6 0,#5aa6d8 2px,rgba(124,205,246,0) 3px)"></div>
<div class="title" style="left:957px;top:477px;width:940px;height:44px;border-radius:4px 0 0 0;background:linear-gradient(#7ecff7 0,#88d0f4 2px,#a0d3f0 4px,#b8d7ec 7px,#cddbe9 11px,#dce0e7 16px,#e2e3e5 21px,#e4e3e2 28px,#e2e0de 38px,#e0dedc 44px)"></div>
<svg class="a" style="left:963px;top:480px" width="16" height="15" viewBox="0 0 16 15"><rect x=".5" y=".5" width="15" height="14" rx="1.5" fill="#c8d4de" stroke="#66788a"/><rect x="2" y="2" width="12" height="9" fill="#34485c"/><rect x="2" y="2" width="12" height="4" fill="#4a6480" opacity=".6"/><path d="M3.2 3.2 L5.6 4.5 L3.2 5.8" fill="none" stroke="#e8e8e8" stroke-width="1"/><rect x="6.5" y="5" width="2.6" height="1" fill="#dcdcdc"/><rect x="2" y="12" width="12" height="1" fill="#8a8a8a"/></svg>
<svg class="a" style="left:985.1px;top:479.5px" width="16" height="17" viewBox="0 0 16 17"><defs><linearGradient id="b9f" x1="0" y1="0" x2="0" y2="1"><stop offset="0" stop-color="#d4e2ee"/><stop offset="1" stop-color="#c6d4e0"/></linearGradient><linearGradient id="b9r" x1="0" y1="0" x2="0.3" y2="1"><stop offset="0" stop-color="#b4c6d6"/><stop offset="1" stop-color="#8fa2b2"/></linearGradient></defs><circle cx="8" cy="8.7" r="7" fill="#fff" opacity=".55"/><circle cx="8" cy="8" r="7.0" fill="url(#b9f)" stroke="url(#b9r)" stroke-width="1.1"/><circle cx="8" cy="7.3" r=".55" fill="#8a8886"/><circle cx="8" cy="8.5" r=".7" fill="#f4f4f4"/></svg>
<svg class="a" style="left:1848.2px;top:479.2px" width="16" height="17" viewBox="0 0 16 17"><defs><linearGradient id="b10f" x1="0" y1="0" x2="0" y2="1"><stop offset="0" stop-color="#e2ecf4"/><stop offset="1" stop-color="#c8d4de"/></linearGradient><linearGradient id="b10r" x1="0" y1="0" x2="0.3" y2="1"><stop offset="0" stop-color="#c4d4e2"/><stop offset="1" stop-color="#8d9fae"/></linearGradient></defs><circle cx="8" cy="8.7" r="7" fill="#fff" opacity=".55"/><circle cx="8" cy="8" r="6.8" fill="url(#b10f)" stroke="url(#b10r)" stroke-width="1.1"/><path d="M5 7.6 L8 10.4 L11 7.6" fill="none" stroke="#fff" stroke-opacity=".7" stroke-width="1.6"/><path d="M5 6.8 L8 9.6 L11 6.8" fill="none" stroke="#8496a6" stroke-width="1.35"/></svg>
<svg class="a" style="left:1871.2px;top:479.2px" width="16" height="17" viewBox="0 0 16 17"><defs><linearGradient id="b11f" x1="0" y1="0" x2="0" y2="1"><stop offset="0" stop-color="#e2ecf4"/><stop offset="1" stop-color="#c8d4de"/></linearGradient><linearGradient id="b11r" x1="0" y1="0" x2="0.3" y2="1"><stop offset="0" stop-color="#c4d4e2"/><stop offset="1" stop-color="#8d9fae"/></linearGradient></defs><circle cx="8" cy="8.7" r="7" fill="#fff" opacity=".55"/><circle cx="8" cy="8" r="6.8" fill="url(#b11f)" stroke="url(#b11r)" stroke-width="1.1"/><path d="M5 9.4 L8 6.7 L11 9.4" fill="none" stroke="#fff" stroke-opacity=".7" stroke-width="1.6"/><path d="M5 8.6 L8 5.9 L11 8.6" fill="none" stroke="#8496a6" stroke-width="1.35"/></svg>
<svg class="a" style="left:1894.2px;top:479.2px" width="16" height="17" viewBox="0 0 16 17"><defs><linearGradient id="b12f" x1="0" y1="0" x2="0" y2="1"><stop offset="0" stop-color="#e2ecf4"/><stop offset="1" stop-color="#c8d4de"/></linearGradient><linearGradient id="b12r" x1="0" y1="0" x2="0.3" y2="1"><stop offset="0" stop-color="#c4d4e2"/><stop offset="1" stop-color="#8d9fae"/></linearGradient></defs><circle cx="8" cy="8.7" r="7" fill="#fff" opacity=".55"/><circle cx="8" cy="8" r="6.8" fill="url(#b12f)" stroke="url(#b12r)" stroke-width="1.1"/><path d="M4.9 4.9 L11.1 11.1 M11.1 4.9 L4.9 11.1" fill="none" stroke="#8496a6" stroke-width="1.25"/></svg>
<div class="ui u" style="left:1326.00px;top:481px;color:#828180;transform:scaleX(1.1620)">() 192.168.192.128 — Konsole &lt;2&gt;</div>
<div class="menu" style="left:957px;top:500px;width:940px;height:21px;background:transparent"><div class="ui u" style="left:9.70px;top:4px;color:#1c1c1c;transform:scaleX(1.1840)">Файл</div><div class="ui u" style="left:60.30px;top:4px;color:#1c1c1c;transform:scaleX(1.1999)">Правка</div><div class="ui u" style="left:125.50px;top:4px;color:#1c1c1c;transform:scaleX(1.2251)">Вид</div><div class="ui u" style="left:168.50px;top:4px;color:#1c1c1c;transform:scaleX(1.2792)">Закладки</div><div class="ui u" style="left:251.40px;top:4px;color:#1c1c1c;transform:scaleX(1.2407)">Настройка</div><div class="ui u" style="left:341.70px;top:4px;color:#1c1c1c;transform:scaleX(1.1921)">Справка</div></div>
<div class="a" style="left:957px;top:521px;width:2px;height:445px;background:#e6e5e4"></div>
<div class="a" style="left:943px;top:84px;width:14px;height:393px;background:linear-gradient(90deg,rgba(150,200,236,0),rgba(140,196,236,.5) 55%,rgba(126,196,240,.95));-webkit-mask-image:linear-gradient(180deg,transparent 0,#000 28px);mask-image:linear-gradient(180deg,transparent 0,#000 28px)"></div>
<div class="a" style="left:938px;top:330px;width:19px;height:113px;background:linear-gradient(180deg,rgba(105,130,158,0) 0,rgba(105,130,158,.2) 50%,rgba(105,130,158,.42) 100%)"></div>
<div class="a" style="left:926px;top:443px;width:31px;height:34px;background:linear-gradient(90deg,rgba(105,130,158,0) 0,rgba(105,130,158,.25) 45%,rgba(105,130,158,.45) 100%)"></div>
<div class="a" style="left:949px;top:477px;width:8px;height:489px;background:linear-gradient(90deg,rgba(40,40,40,0),rgba(40,40,40,.1) 40%,rgba(40,40,40,.3) 70%,rgba(40,40,40,.62))"></div>
</div>
</body></html>
